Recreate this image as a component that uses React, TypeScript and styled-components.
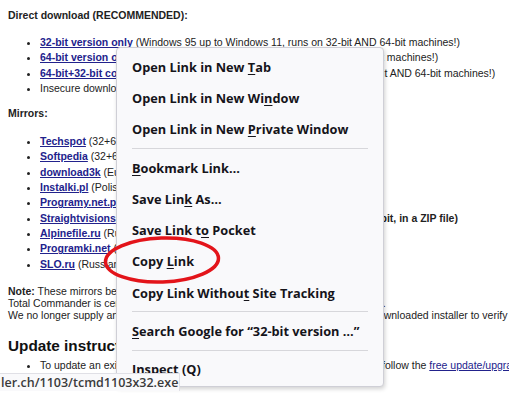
import * as React from "react";
import styled, { createGlobalStyle } from "styled-components";

type MenuEntry =
  | { kind: "item"; text: string; key?: number }
  | { kind: "sep" };

// context menu entries, key = index of the underlined access key
const menuEntries: MenuEntry[] = [
  { kind: "item", text: "Open Link in New Tab", key: 17 },
  { kind: "item", text: "Open Link in New Window", key: 19 },
  { kind: "item", text: "Open Link in New Private Window", key: 17 },
  { kind: "sep" },
  { kind: "item", text: "Bookmark Link\u2026", key: 0 },
  { kind: "item", text: "Save Link As\u2026", key: 8 },
  { kind: "item", text: "Save Link to Pocket", key: 11 },
  { kind: "item", text: "Copy Link", key: 5 },
  { kind: "item", text: "Copy Link Without Site Tracking", key: 16 },
  { kind: "sep" },
  { kind: "item", text: "Search Google for \u201c32-bit version \u2026\u201d", key: 0 },
  { kind: "sep" },
  { kind: "item", text: "Inspect (Q)" },
];

const directLinks = [
  { link: "32-bit version only", rest: " (Windows 95 up to Windows 11, runs on 32-bit AND 64-bit machines!)" },
  { link: "64-bit version only", rest: " (Windows XP x64 up until Windows 11, only for 64-bit machines!)" },
  { link: "64-bit+32-bit combined", rest: " (Windows 95 up to Windows 11, runs on all 32-bit AND 64-bit machines!)" },
];

const mirrors = [
  { link: "Techspot", rest: " (32+64 bit, USA)" },
  { link: "Softpedia", rest: " (32+64 bit, Romania)" },
  { link: "download3k", rest: " (Europe)" },
  { link: "Instalki.pl", rest: " (Polish)" },
  { link: "Programy.net.pl", rest: " (Polish)" },
  { link: "Straightvisions", rest: "", bold: " (German download site, mirror of all versions 32+64 bit, in a ZIP file)" },
  { link: "Alpinefile.ru", rest: " (Russian)" },
  { link: "Programki.net", rest: " (Russian)" },
  { link: "SLO.ru", rest: " (Russian)" },
];

function AccessLabel({ text, at }: { text: string; at?: number }) {
  if (at === undefined) return <span>{text}</span>;
  return (
    <span>
      {text.slice(0, at)}
      <u>{text[at]}</u>
      {text.slice(at + 1)}
    </span>
  );
}

function App() {
  return (
    <Page>
      <GlobalStyle />
      <SectionTitle $gap={0}>Direct download (RECOMMENDED):</SectionTitle>
      <BulletList $gap={13}>
        {directLinks.map((d) => (
          <li key={d.link}>
            <Link href="#">{d.link}</Link>
            {d.rest}
          </li>
        ))}
        <li>Insecure download (http instead of https, only for old browsers)</li>
      </BulletList>

      <SectionTitle $gap={10}>Mirrors:</SectionTitle>
      <BulletList $gap={14}>
        {mirrors.map((m) => (
          <li key={m.link}>
            <Link href="#">{m.link}</Link>
            {m.rest}
            {m.bold && <b>{m.bold}</b>}
          </li>
        ))}
      </BulletList>

      <NoteText>
        <b>Note:</b> These mirrors belong to third parties, we are not responsible.
        <br />
        Total Commander is certified virus free by all these mirror sites, see their website.
        <br />
        We no longer supply any checksums, please check the digital signature of the downloaded installer to verify it.
      </NoteText>

      <SubHeading>Update instructions</SubHeading>
      <BulletList $gap={1}>
        <li>
          To update an existing older version to the current version, you can simply follow the{" "}
          <PlainLink href="#">free update/upgrade instructions</PlainLink>
        </li>
      </BulletList>

      <Ellipse width="130" height="60" viewBox="0 0 130 60">
        <ellipse
          cx="63"
          cy="29"
          rx="56.5"
          ry="22"
          transform="rotate(-2 63 29)"
          fill="none"
          stroke="#e3141a"
          strokeWidth="3.5"
        />
      </Ellipse>

      <Menu>
        {menuEntries.map((e, i) =>
          e.kind === "sep" ? (
            <Separator key={i} />
          ) : (
            <MenuItem key={i}>
              <AccessLabel text={e.text} at={e.key} />
            </MenuItem>
          )
        )}
      </Menu>

      <StatusBar>ler.ch/1103/tcmd1103x32.exe</StatusBar>
    </Page>
  );
}

const GlobalStyle = createGlobalStyle`
  html, body {
    margin: 0;
    padding: 0;
    background: #fff;
    overflow: hidden;
  }
  body {
    font-family: "Liberation Sans", Arial, sans-serif;
    font-size: 10.5px;
    color: #222;
  }
`;

const Page = styled.div`
  position: relative;
  width: 509px;
  height: 409px;
  box-sizing: border-box;
  padding: 8px;
  overflow: hidden;
  white-space: nowrap;
`;

const SectionTitle = styled.div<{ $gap: number }>`
  margin-top: ${(p) => p.$gap}px;
  font-weight: bold;
  line-height: 14px;
`;

const BulletList = styled.ul<{ $gap: number }>`
  margin: ${(p) => p.$gap}px 0 0;
  padding-left: 32px;
  line-height: 15.3px;
`;

const Link = styled.a`
  color: #22228c;
  font-weight: bold;
  text-decoration: underline;
`;

const PlainLink = styled.a`
  color: #22228c;
  text-decoration: underline;
`;

const NoteText = styled.p`
  margin: 13px 0 0;
  font-size: 10.5px;
  line-height: 12px;
`;

const SubHeading = styled.h2`
  margin: 14px 0 0;
  font-size: 15.3px;
  line-height: 22px;
  font-weight: bold;
  color: #111;
`;

const Ellipse = styled.svg`
  position: absolute;
  left: 99px;
  top: 231px;
  z-index: 1;
`;

const Menu = styled.div`
  position: absolute;
  left: 116px;
  top: 47px;
  width: 268px;
  box-sizing: border-box;
  padding: 3px 0 1px;
  background: #f9f9fb;
  border: 1px solid #cfcfd6;
  border-radius: 4px;
  box-shadow: 1px 2px 4px rgba(0, 0, 0, 0.18);
  font-family: "Open Sans", "Noto Sans", sans-serif;
  font-size: 12.75px;
  font-weight: 700;
  color: #15141a;
`;

const MenuItem = styled.div`
  display: flex;
  align-items: center;
  height: 31.3px;
  padding-left: 15px;

  u {
    text-decoration-thickness: 1px;
    text-underline-offset: 2px;
  }
`;

const Separator = styled.div`
  height: 1px;
  margin: 3px 15px;
  background: #d7d7db;
`;

const StatusBar = styled.div`
  position: absolute;
  left: 0;
  top: 373px;
  width: 180px;
  height: 18px;
  box-sizing: border-box;
  padding-left: 1px;
  background: #f9f9fb;
  border-top: 1px solid #e0e0e6;
  border-right: 1px solid #e0e0e6;
  font-family: "Open Sans", "Noto Sans", sans-serif;
  font-size: 12.5px;
  font-weight: 600;
  line-height: 17px;
  color: #3b3b3b;
  overflow: hidden;
  z-index: 2;
`;

export default App;
